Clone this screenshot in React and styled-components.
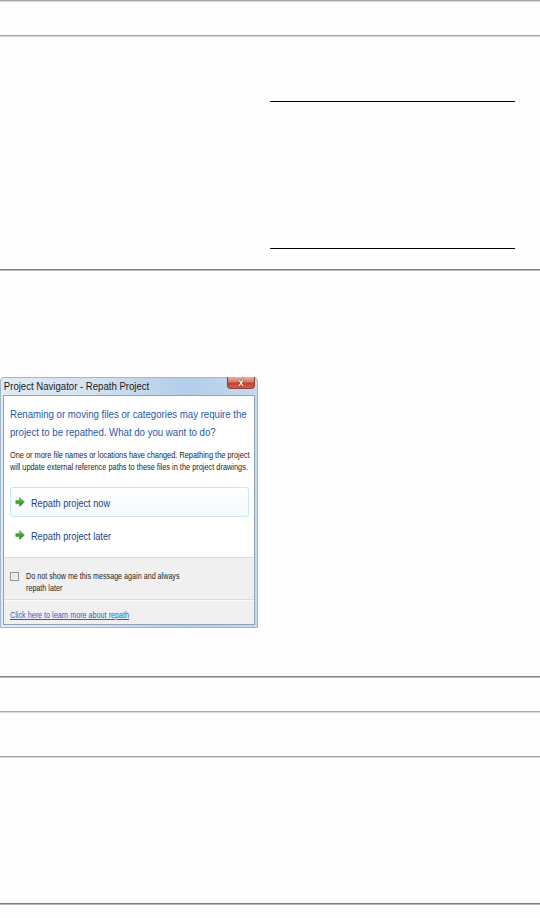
import React from "react";
import styled, { createGlobalStyle, css } from "styled-components";

const Global = createGlobalStyle`
  html, body { margin: 0; padding: 0; background: #fefefe; }
  body { font-family: "Liberation Sans", Arial, sans-serif; }
`;

/* the screenshot's dialog text is horizontally compressed (Segoe UI squeezed) */
const condensed = css`
  transform: scaleX(0.82);
  transform-origin: 0 50%;
  white-space: nowrap;
`;

const Page = styled.div`
  width: 540px;
  min-height: 918px;
  display: flex;
  flex-direction: column;
  background: #fefefe;
`;

const Rule = styled.div`
  flex: none;
  height: 2px;
  background: ${(p) =>
    p.$tone === "dark"
      ? "linear-gradient(#808080 0 50%, #b8b8b8 50%)"
      : "linear-gradient(#a8a8a8 0 50%, #d8d8d8 50%)"};
`;

const Band = styled.div`
  flex: none;
  height: ${(p) => p.$h}px;
`;

const SplitSection = styled.section`
  flex: none;
  height: 232px;
  box-sizing: border-box;
  display: flex;
  padding-left: 270px;
`;

const CellColumn = styled.div`
  width: 245px;
  padding-top: 64px;
  display: flex;
  flex-direction: column;
`;

const BlackRule = styled.div`
  height: 1px;
  background: #000;
`;

const CellBody = styled.div`
  height: 146px;
`;

const FigureSection = styled.section`
  flex: none;
  height: 405px;
  box-sizing: border-box;
  padding-top: 106px;
  display: flex;
  align-items: flex-start;
`;

/* ---------- dialog ---------- */

const Dialog = styled.div`
  width: 258px;
  height: 251px;
  box-sizing: border-box;
  display: flex;
  flex-direction: column;
  background: linear-gradient(90deg, #e2eaf3 0%, #d5e2f0 35%, #b4cdea 72%, #c6d9ee 100%);
  border: 1px solid #9fb6d0;
  border-radius: 4px 4px 0 0;
  padding: 0 2px 2px;
  font-family: "Liberation Sans", Arial, sans-serif;
`;

const TitleBar = styled.div`
  height: 17px;
  flex: none;
  display: flex;
  justify-content: space-between;
  align-items: flex-start;
`;

const TitleText = styled.span`
  ${condensed};
  display: inline-block;
  font-size: 11.7px;
  line-height: 16px;
  padding: 0 0 0 1px;
  color: #1a1a1a;
`;

const CloseButton = styled.div`
  width: 28px;
  height: 12px;
  margin-top: -1px;
  box-sizing: border-box;
  border: 1px solid #8c3d33;
  border-top: none;
  border-radius: 0 0 4px 4px;
  background: linear-gradient(#eab0a6 0%, #d9786a 45%, #c5402f 55%, #d2614f 100%);
  display: flex;
  align-items: center;
  justify-content: center;
  color: #fff;
  font-size: 10px;
  font-weight: bold;
  line-height: 1;
  text-shadow: 0 0 1px #3a1a16, 0 0 1px #3a1a16;
`;

const Body = styled.div`
  flex: 1;
  display: flex;
  flex-direction: column;
  border: 1px solid #8fa2b8;
  background: #fff;
  overflow: hidden;
`;

const Content = styled.div`
  flex: none;
  height: 161px;
  box-sizing: border-box;
  padding: 9px 5px 0 6px;
  display: flex;
  flex-direction: column;
`;

const MainInstruction = styled.div`
  ${condensed};
  font-size: 11.75px;
  line-height: 18px;
  color: #1f58a8;
`;

const Detail = styled.div`
  ${condensed};
  margin-top: 8px;
  font-size: 9px;
  line-height: 12px;
  color: #1e1e1e;
`;

const CommandList = styled.div`
  margin-top: 14px;
  display: flex;
  flex-direction: column;
  gap: 3px;
`;

const CommandLink = styled.div`
  height: 30px;
  box-sizing: border-box;
  display: flex;
  align-items: center;
  gap: 6px;
  padding-left: 4px;
  border: 1px solid ${(p) => (p.$hot ? "#c5e6f5" : "transparent")};
  border-radius: 3px;
  background: ${(p) => (p.$hot ? "linear-gradient(#fdfeff, #f6fbfe)" : "transparent")};
`;

const CommandLabel = styled.span`
  ${condensed};
  display: inline-block;
  color: #173f86;
  font-size: 11.2px;
  line-height: 14px;
  margin-top: 1px;
`;

const Footer = styled.div`
  flex: 1;
  display: flex;
  flex-direction: column;
  background: #f0f0f0;
  border-top: 1px solid #dcdcdc;
`;

const CheckRow = styled.label`
  display: flex;
  align-items: flex-start;
  gap: 7px;
  padding: 12px 0 5px 6px;
  border-bottom: 1px solid #dcdcdc;
  box-shadow: 0 1px 0 #fbfbfb;
`;

const CheckLabel = styled.span`
  ${condensed};
  display: inline-block;
  font-size: 8.75px;
  line-height: 12px;
  color: #1e1e1e;
`;

const CheckBox = styled.span`
  flex: none;
  width: 9px;
  height: 9px;
  margin-top: 2px;
  box-sizing: border-box;
  border: 1px solid #8e8f8f;
  background: linear-gradient(135deg, #dcdcdc, #f6f6f6);
  box-shadow: inset 0 0 0 1px #f4f4f4;
`;

const LinkRow = styled.div`
  display: flex;
  align-items: flex-start;
  padding: 9px 0 0 6px;
`;

const HelpLink = styled.a`
  ${condensed};
  display: inline-block;
  font-size: 8.8px;
  line-height: 12px;
  color: #1a66c8;
  text-decoration: underline;
`;

const Arrow = () => (
  <svg width="10" height="10" viewBox="0 0 10 10" aria-hidden="true">
    <defs>
      <linearGradient id="ag" x1="0" y1="0" x2="0" y2="1">
        <stop offset="0" stopColor="#8ad86a" />
        <stop offset="0.5" stopColor="#3faa26" />
        <stop offset="1" stopColor="#1f7f14" />
      </linearGradient>
    </defs>
    <path d="M0.8 3.6 H4.6 V0.6 L9.4 5 L4.6 9.4 V6.4 H0.8 Z" fill="url(#ag)" stroke="#2a7a1e" strokeWidth="0.5" />
  </svg>
);

export default function App() {
  return (
    <>
      <Global />
      <Page>
        <Rule $tone="light" />
        <Band $h={33} />
        <Rule $tone="light" />
        <SplitSection>
          <CellColumn>
            <BlackRule />
            <CellBody />
            <BlackRule />
          </CellColumn>
        </SplitSection>
        <Rule $tone="dark" />
        <FigureSection>
          <Dialog>
            <TitleBar>
              <TitleText>Project Navigator - Repath Project</TitleText>
              <CloseButton>x</CloseButton>
            </TitleBar>
            <Body>
              <Content>
                <MainInstruction>
                  Renaming or moving files or categories may require the
                  <br />
                  project to be repathed. What do you want to do?
                </MainInstruction>
                <Detail>
                  One or more file names or locations have changed. Repathing the project
                  <br />
                  will update external reference paths to these files in the project drawings.
                </Detail>
                <CommandList>
                  <CommandLink $hot>
                    <Arrow />
                    <CommandLabel>Repath project now</CommandLabel>
                  </CommandLink>
                  <CommandLink>
                    <Arrow />
                    <CommandLabel>Repath project later</CommandLabel>
                  </CommandLink>
                </CommandList>
              </Content>
              <Footer>
                <CheckRow>
                  <CheckBox />
                  <CheckLabel>
                    Do not show me this message again and always
                    <br />
                    repath later
                  </CheckLabel>
                </CheckRow>
                <LinkRow>
                  <HelpLink href="#">Click here to learn more about repath</HelpLink>
                </LinkRow>
              </Footer>
            </Body>
          </Dialog>
        </FigureSection>
        <Rule $tone="dark" />
        <Band $h={33} />
        <Rule $tone="light" />
        <Band $h={43} />
        <Rule $tone="light" />
        <Band $h={145} />
        <Rule $tone="dark" />
      </Page>
    </>
  );
}
